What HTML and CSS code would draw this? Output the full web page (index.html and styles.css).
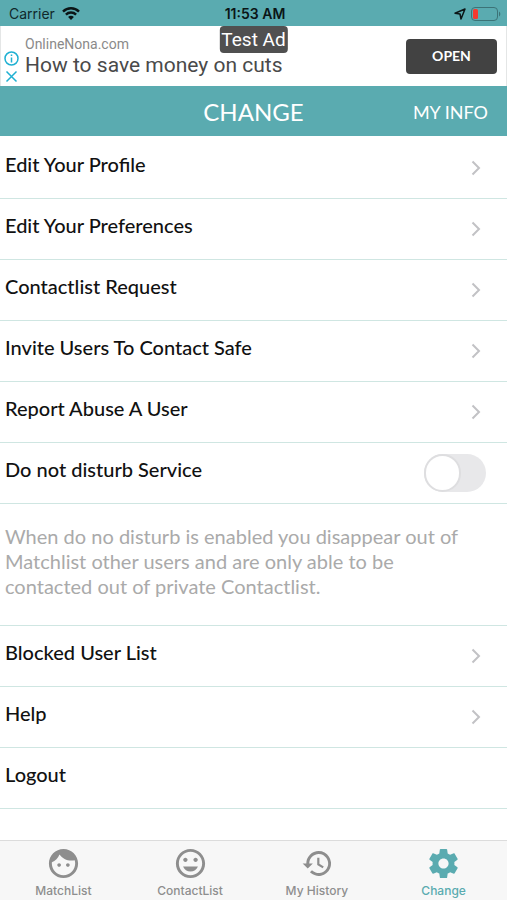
FILE: index.html
```html
<!DOCTYPE html>
<html lang="en">
<head>
<meta charset="utf-8">
<meta name="viewport" content="width=device-width, initial-scale=1">
<title>Change</title>
<link rel="stylesheet" href="styles.css">
</head>
<body>
<div class="status">
  <div class="status-side">
    <span>Carrier</span>
    <svg class="wifi" viewBox="0 0 18 13" aria-hidden="true"><path d="M9 13l2.900-3a4 4 0 0 0-5.800 0z"/><path class="arc" d="M3.900 7.600a7.200 7.200 0 0 1 10.200 0M1 4.600a11.300 11.300 0 0 1 16 0"/></svg>
  </div>
  <time class="clock">11:53 AM</time>
  <div class="status-side status-end">
    <svg class="location" viewBox="0 0 12 12" aria-hidden="true"><path d="M11 1L7 11L6 6L1 5.200z"/></svg>
    <svg class="battery" viewBox="0 0 30 14" aria-hidden="true"><rect class="case" x=".5" y=".5" width="26" height="13" rx="3.500"/><rect class="charge" x="2" y="2" width="5" height="10" rx="1.500"/><path class="cap" d="M28 4.500a3 3 0 0 1 0 5z"/></svg>
  </div>
</div>

<aside class="ad" aria-label="Advertisement">
  <div class="ad-choices">
    <svg viewBox="0 0 15 15" aria-hidden="true"><circle cx="7.500" cy="7.500" r="6.500"/><path d="M7.500 6.500V11.500M7.500 3.500v1.500"/></svg>
    <svg viewBox="0 0 15 15" aria-hidden="true"><path d="M2.500 2.500l10 10M12.500 2.500l-10 10"/></svg>
  </div>
  <div class="ad-text">
    <span class="ad-site">OnlineNona.com</span>
    <span class="ad-title">How to save money on cuts</span>
  </div>
  <button class="ad-open" type="button">OPEN</button>
  <span class="ad-badge">Test Ad</span>
</aside>

<header class="bar">
  <h1 class="title">CHANGE</h1>
  <a class="info" href="#info">MY INFO</a>
</header>

<main class="list">
  <a class="row" href="#profile"><span>Edit Your Profile</span><svg class="chevron" viewBox="0 0 10 16" aria-hidden="true"><path d="M1.500 1.500L8 8l-6.500 6.500"/></svg></a>
  <a class="row" href="#preferences"><span>Edit Your Preferences</span><svg class="chevron" viewBox="0 0 10 16" aria-hidden="true"><path d="M1.500 1.500L8 8l-6.500 6.500"/></svg></a>
  <a class="row" href="#requests"><span>Contactlist Request</span><svg class="chevron" viewBox="0 0 10 16" aria-hidden="true"><path d="M1.500 1.500L8 8l-6.500 6.500"/></svg></a>
  <a class="row" href="#invite"><span>Invite Users To Contact Safe</span><svg class="chevron" viewBox="0 0 10 16" aria-hidden="true"><path d="M1.500 1.500L8 8l-6.500 6.500"/></svg></a>
  <a class="row" href="#report"><span>Report Abuse A User</span><svg class="chevron" viewBox="0 0 10 16" aria-hidden="true"><path d="M1.500 1.500L8 8l-6.500 6.500"/></svg></a>
  <label class="row" for="dnd"><span>Do not disturb Service</span><input class="switch" id="dnd" type="checkbox" role="switch"></label>
  <p class="note">When do no disturb is enabled you disappear out of Matchlist other users and are only able to be contacted out of private Contactlist.</p>
  <a class="row" href="#blocked"><span>Blocked User List</span><svg class="chevron" viewBox="0 0 10 16" aria-hidden="true"><path d="M1.500 1.500L8 8l-6.500 6.500"/></svg></a>
  <a class="row" href="#help"><span>Help</span><svg class="chevron" viewBox="0 0 10 16" aria-hidden="true"><path d="M1.500 1.500L8 8l-6.500 6.500"/></svg></a>
  <a class="row" href="#logout"><span>Logout</span></a>
</main>

<nav class="tabs">
  <a class="tab" href="#matchlist">
    <svg viewBox="0 0 24 24" aria-hidden="true"><path d="M9 11.750c-.69 0-1.250.56-1.250 1.250s.56 1.250 1.250 1.250 1.250-.56 1.250-1.250-.56-1.250-1.250-1.250zm6 0c-.69 0-1.250.56-1.250 1.250s.56 1.250 1.250 1.250 1.250-.56 1.250-1.250-.56-1.250-1.250-1.250zM12 2C6.480 2 2 6.480 2 12s4.480 10 10 10 10-4.480 10-10S17.520 2 12 2zm0 18c-4.410 0-8-3.590-8-8 0-.29.02-.58.05-.86 2.360-1.050 4.230-2.980 5.210-5.370C11.070 8.330 14.050 10 17.420 10c.78 0 1.530-.09 2.250-.26.21.71.33 1.470.33 2.260 0 4.410-3.590 8-8 8z"/></svg>
    <span>MatchList</span>
  </a>
  <a class="tab" href="#contactlist">
    <svg viewBox="0 0 24 24" aria-hidden="true"><path d="M11.990 2C6.470 2 2 6.480 2 12s4.470 10 9.990 10C17.520 22 22 17.520 22 12S17.520 2 11.990 2zM12 20c-4.420 0-8-3.580-8-8s3.580-8 8-8 8 3.580 8 8-3.580 8-8 8zm3.500-9c.83 0 1.500-.67 1.500-1.500S16.330 8 15.500 8 14 8.670 14 9.500s.67 1.500 1.500 1.500zm-7 0c.83 0 1.500-.67 1.500-1.500S9.330 8 8.500 8 7 8.670 7 9.500 7.670 11 8.500 11zm3.500 6.500c2.330 0 4.310-1.460 5.110-3.500H6.890c.8 2.040 2.780 3.500 5.110 3.500z"/></svg>
    <span>ContactList</span>
  </a>
  <a class="tab" href="#history">
    <svg viewBox="0 0 24 24" aria-hidden="true"><path d="M13.500 3.500A8.500 8.500 0 0 0 5 12H2.500l3.500 3.500L9.500 12H7a6.500 6.500 0 1 1 1.900 4.600l-1.420 1.420A8.500 8.500 0 1 0 13.500 3.500zM12.500 8v5l3.700 2.200.8-1.200-3-1.800V8z"/></svg>
    <span>My History</span>
  </a>
  <a class="tab active" href="#change" aria-current="page">
    <svg viewBox="0 0 24 24" aria-hidden="true"><path d="M19.430 12.980c.04-.32.07-.64.07-.98s-.03-.66-.07-.98l2.110-1.650c.19-.15.24-.42.12-.64l-2-3.460c-.12-.22-.39-.3-.61-.22l-2.490 1c-.52-.4-1.080-.73-1.690-.98l-.38-2.650C14.460 2.180 14.250 2 14 2h-4c-.25 0-.46.18-.49.42l-.38 2.650c-.61.25-1.170.59-1.690.98l-2.490-1c-.23-.09-.49 0-.61.22l-2 3.460c-.13.22-.07.49.12.64l2.110 1.650c-.04.32-.07.65-.07.98s.03.66.07.98l-2.110 1.650c-.19.15-.24.42-.12.64l2 3.460c.12.22.39.3.61.22l2.490-1c.52.4 1.080.73 1.690.98l.38 2.650c.03.24.24.42.49.42h4c.25 0 .46-.18.49-.42l.38-2.650c.61-.25 1.170-.59 1.690-.98l2.490 1c.23.09.49 0 .61-.22l2-3.460c.12-.22.07-.49-.12-.64l-2.110-1.650zM12 15.500c-1.930 0-3.500-1.570-3.500-3.500s1.570-3.500 3.500-3.500 3.500 1.570 3.500 3.500-1.570 3.500-3.500 3.500z"/></svg>
    <span>Change</span>
  </a>
</nav>
</body>
</html>
```

FILE: styles.css
```css
*,
*::before {
  box-sizing: border-box;
}

body {
  display: flex;
  flex-direction: column;
  min-height: 100vh;
  margin: 0;
  background: #fff;
  color: #111;
  font-family: Lato, "Gill Sans", sans-serif;
}

a {
  color: inherit;
  text-decoration: none;
}

svg {
  display: block;
  flex: none;
}

.status {
  display: grid;
  grid-template-columns: 1fr auto 1fr;
  align-items: center;
  height: 26px;
  padding: 1px 6px 0 9px;
  background: #5aabb0;
  color: #10282b;
  font: 400 14px/20px Inter, sans-serif;
}

.status-side {
  display: flex;
  align-items: center;
  gap: 7px;
}

.status-end {
  gap: 5px;
  justify-content: flex-end;
}

.wifi {
  width: 18px;
  height: 13px;
  fill: #0b1516;
}

.arc {
  fill: none;
  stroke: #0b1516;
  stroke-width: 2.4;
}

.clock {
  color: #0b1516;
  font-weight: 600;
}

.location {
  width: 12px;
  height: 12px;
  fill: none;
  stroke: #0b1516;
  stroke-width: 1.5;
  stroke-linejoin: round;
}

.battery {
  width: 30px;
  height: 14px;
}

.case {
  fill: none;
  stroke: #3c7377;
}

.charge {
  fill: #f5392f;
}

.cap {
  fill: #3c7377;
}

.ad {
  position: relative;
  display: flex;
  align-items: center;
  height: 60px;
  padding: 0 9px 0 3px;
  border: solid #e4e6e6;
  border-width: 0 1px;
}

.ad-choices {
  display: grid;
  gap: 3px;
  padding-top: 22px;
}

.ad-choices svg {
  width: 15px;
  height: 15px;
  fill: none;
  stroke: #1fb0d2;
  stroke-width: 1.5;
}

.ad-text {
  display: grid;
  flex: 1;
  padding-left: 6px;
  font-family: Roboto, sans-serif;
}

.ad-site {
  color: #8a8a8a;
  font-size: 14px;
  line-height: 18px;
}

.ad-title {
  color: #4a4a4a;
  font-size: 21px;
  line-height: 24px;
}

.ad-open {
  width: 91px;
  height: 35px;
  border: 0;
  border-radius: 4px;
  background: #424242;
  color: #fff;
  font: 700 14px/20px Lato, sans-serif;
}

.ad-badge {
  position: absolute;
  top: 0;
  left: 50%;
  padding: 0 2px;
  border-radius: 4px;
  background: #505050;
  color: #fff;
  font: 400 19px/27px Roboto, sans-serif;
  transform: translateX(-50%);
}

.bar {
  display: grid;
  grid-template-columns: 1fr auto 1fr;
  align-items: center;
  height: 50px;
  padding: 2px 19px 0;
  background: #5aabb0;
  color: #fff;
}

.title {
  grid-column: 2;
  margin: 0;
  font-size: 24px;
  font-weight: 400;
  line-height: 30px;
}

.info {
  justify-self: end;
  font-size: 18px;
  line-height: 24px;
}

.list {
  flex: 1;
  padding-top: 2px;
}

.row {
  display: flex;
  align-items: center;
  justify-content: space-between;
  min-height: 61px;
  padding: 0 21px 0 5px;
  border-bottom: 1px solid #cfe6e2;
  font-size: 20px;
  font-weight: 500;
  line-height: 24px;
}

.row span {
  padding-bottom: 8px;
}

.chevron {
  width: 10px;
  height: 16px;
  margin-right: 5px;
  fill: none;
  stroke: #c2c2c5;
  stroke-width: 2;
}

.switch {
  width: 62px;
  height: 38px;
  margin: 0;
  border-radius: 19px;
  background: #e8e8ea;
  appearance: none;
}

.switch::before {
  display: block;
  width: 37px;
  height: 38px;
  border: 2px solid #dedee0;
  border-radius: 19px;
  background: #fff;
  content: "";
}

.switch:checked {
  background: #5aabb0;
}

.switch:checked::before {
  margin-left: auto;
}

.note {
  min-height: 122px;
  margin: 0;
  padding: 20px 24px 20px 5px;
  border-bottom: 1px solid #cfe6e2;
  color: #aaa;
  font-size: 20px;
  line-height: 25px;
}

.tabs {
  display: grid;
  grid-template-columns: repeat(4, 1fr);
  height: 60px;
  border-top: 1px solid #dcdcdc;
  background: #f7f7f7;
  color: #8e8e8e;
  font: 500 12px/16px Inter, sans-serif;
}

.tab {
  display: flex;
  flex-direction: column;
  align-items: center;
  gap: 2px;
  padding-top: 5px;
}

.tab svg {
  width: 35px;
  height: 35px;
  fill: currentColor;
}

.active {
  color: #5aabb0;
}
```
